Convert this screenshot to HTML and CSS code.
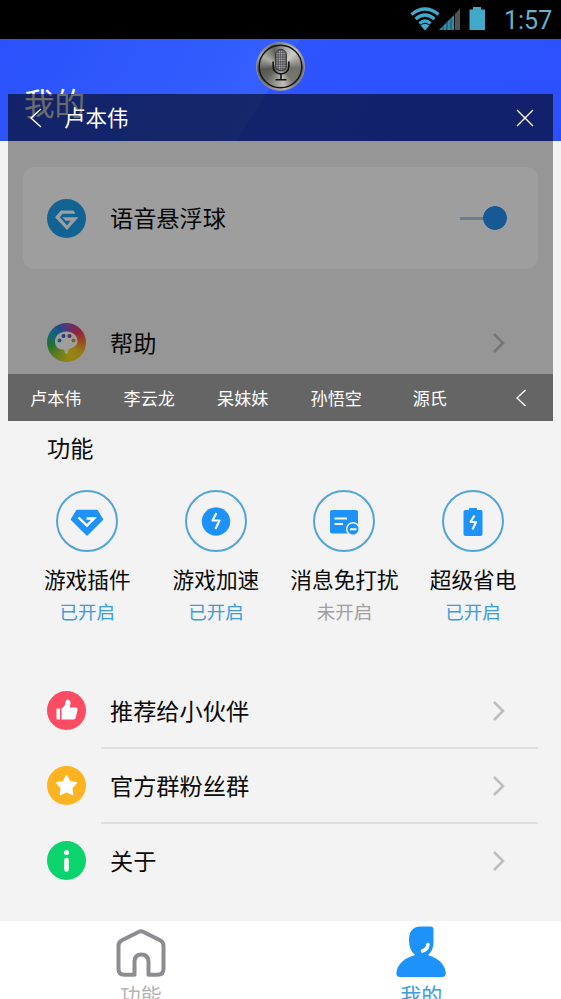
FILE: index.html
```html
<!DOCTYPE html>
<html lang="zh-CN">
<head>
<meta charset="utf-8">
<title>我的</title>
<link rel="stylesheet" href="styles.css">
</head>
<body>
<div class="phone">
  <div class="statusbar">
    <svg class="signals" width="80" height="28" viewBox="0 0 80 28">
      <g fill="none" stroke="#43a9cb" stroke-width="3.2">
        <path d="M2.500 8.500Q16 -2.500 29.500 8.500"/>
        <path d="M6.500 13Q16 5 25.500 13"/>
        <path d="M10.500 17.500Q16 12.500 21.500 17.500"/>
      </g>
      <path d="M11.500 19.500Q16 16 20.500 19.500L16 24.500Z" fill="#43a9cb"/>
      <path d="M30 24L45 9V24Z" fill="#368aa6"/>
      <path d="M34 20V24M38 16V24M42 12V24" stroke="#19495c" stroke-width="1"/>
      <path d="M46 8L51 2.500V24H46Z" fill="#4c5658"/>
      <path d="M60.500 3.500H64V1H72V3.500H76V24H60.500Z" fill="#43a9cb"/>
    </svg>
    <span class="clock">1:57</span>
  </div>
  <header class="header"><h1>我的</h1></header>

  <main class="content">
    <section class="card">
      <svg class="icon" viewBox="0 0 39 39">
        <circle cx="19.500" cy="19.500" r="19.500" fill="#1aa1ee"/>
        <path d="M14 11.500H26.500L28.500 14.800H15.500L12.800 18.300L20 26.500L23.800 21.700H18.500L15.500 18.200H31.500L20 31L8 18.300Z" fill="#fff"/>
      </svg>
      <span class="label">语音悬浮球</span>
      <span class="switch"></span>
    </section>

    <div class="row help">
      <svg class="icon" viewBox="0 0 39 39">
        <foreignObject width="39" height="39"><div class="wheel"></div></foreignObject>
        <path d="M19.500 8.500C12 8.500 7.500 13.500 8 19.500C8.500 25 12.500 26.500 16.500 26.500C18 26.500 17 30.500 19.500 31C21.500 31 20.500 26.500 23 25.500C28 24 30.500 22 30.500 18C30.500 12 25 8.500 19.500 8.500Z" fill="#fff"/>
        <circle cx="12.500" cy="17.500" r="2" fill="#2894ca"/><circle cx="16.500" cy="13" r="2" fill="#455fc4"/><circle cx="22.500" cy="13" r="2" fill="#8b4795"/><circle cx="26.500" cy="17.500" r="2" fill="#d79828"/>
      </svg>
      <span class="label">帮助</span>
      <svg class="chevron" viewBox="0 0 14 22"><path d="M2 2L11 11L2 20"/></svg>
    </div>

    <h2 class="section">功能</h2>
    <div class="features">
      <div class="feature">
        <div class="ring"><svg viewBox="0 0 62 62">
          <path d="M21 20.500H41L46.500 29.500L31 45L15.500 29.500Z" fill="#1d93fa" stroke="#1d93fa" stroke-width="1.500" stroke-linejoin="round"/>
          <path d="M22.500 27.500L31 35.500L38 28.500H30.500" fill="none" stroke="#fff" stroke-width="2.400"/>
        </svg></div>
        <span class="name">游戏插件</span><span class="state">已开启</span>
      </div>
      <div class="feature">
        <div class="ring"><svg viewBox="0 0 62 62">
          <circle cx="31" cy="31.500" r="14.200" fill="#1d93fa"/>
          <path d="M31.500 23L27.500 30.500H34.500L30.500 39" fill="none" stroke="#fff" stroke-width="2.100" stroke-linejoin="round"/>
        </svg></div>
        <span class="name">游戏加速</span><span class="state">已开启</span>
      </div>
      <div class="feature">
        <div class="ring"><svg viewBox="0 0 62 62">
          <rect x="17" y="20" width="28" height="23.500" rx="2" fill="#1d93fa"/>
          <path d="M21.500 28.500H34M21.500 34H30" stroke="#fff" stroke-width="2"/>
          <circle cx="40" cy="39" r="6.300" fill="#1d93fa" stroke="#f3f3f3" stroke-width="1.500"/>
          <path d="M37 39.300H43.500" stroke="#fff" stroke-width="2"/>
        </svg></div>
        <span class="name">消息免打扰</span><span class="state off">未开启</span>
      </div>
      <div class="feature">
        <div class="ring"><svg viewBox="0 0 62 62">
          <rect x="21.500" y="20" width="19" height="26" rx="2" fill="#1d93fa"/>
          <rect x="27" y="18" width="8" height="4" rx="1" fill="#1d93fa"/>
          <path d="M32.500 25.500L28.500 32H34L30.500 39.500" fill="none" stroke="#fff" stroke-width="2.100" stroke-linejoin="round"/>
        </svg></div>
        <span class="name">超级省电</span><span class="state">已开启</span>
      </div>
    </div>

    <div class="list">
      <div class="row">
        <svg class="icon" viewBox="0 0 39 39">
          <circle cx="19.500" cy="19.500" r="19.500" fill="#fb4c63"/>
          <path d="M9.500 17.500H13V28.500H10.500Q9.500 28.500 9.500 27.500ZM14.500 17.500Q18.500 15.500 18.500 10.500Q19 8.500 21 8.500Q23.500 9 23.500 12.500L22.800 16.500H28.500Q31 16.500 30.500 19L28.800 26.500Q28.300 28.500 26.500 28.500H14.500Z" fill="#fff"/>
        </svg>
        <span class="label">推荐给小伙伴</span>
        <svg class="chevron" viewBox="0 0 14 22"><path d="M2 2L11 11L2 20"/></svg>
      </div>
      <div class="row">
        <svg class="icon" viewBox="0 0 39 39">
          <circle cx="19.500" cy="19.500" r="19.500" fill="#feb321"/>
          <path d="M19.500 10L22.600 15.800L29 17L24.600 21.800L25.400 28.300L19.500 25.500L13.600 28.300L14.400 21.800L10 17L16.400 15.800Z" fill="#fff" stroke="#fff" stroke-width="1.800" stroke-linejoin="round"/>
        </svg>
        <span class="label">官方群粉丝群</span>
        <svg class="chevron" viewBox="0 0 14 22"><path d="M2 2L11 11L2 20"/></svg>
      </div>
      <div class="row">
        <svg class="icon" viewBox="0 0 39 39">
          <circle cx="19.500" cy="19.500" r="19.500" fill="#0bd46c"/>
          <circle cx="19.500" cy="11.500" r="2.500" fill="#fff"/>
          <path d="M19.500 19V28.500" stroke="#fff" stroke-width="4.600" stroke-linecap="round"/>
        </svg>
        <span class="label">关于</span>
        <svg class="chevron" viewBox="0 0 14 22"><path d="M2 2L11 11L2 20"/></svg>
      </div>
    </div>
  </main>

  <nav class="tabbar">
    <div class="tab">
      <svg viewBox="0 0 50 50"><path d="M23 2.800Q25 1.800 27 2.800L44 11.200Q47.500 13 47.500 16.500V40Q47.500 45.800 41.500 45.800H32.500V33Q32.500 25.500 25.300 25.500Q18.500 25.500 18.500 33V45.800H8.500Q2.500 45.800 2.500 40V16.500Q2.500 13 6 11.200Z" fill="none" stroke="#8c8c92" stroke-width="4" stroke-linejoin="round"/></svg>
      <span>功能</span>
    </div>
    <div class="tab active">
      <svg viewBox="0 0 50 50"><path d="M25 -2.500H34.500Q37.500 -2.500 37.500 .5V13Q37.500 21.500 32 26Q43 29.500 47 36Q50.500 42 49.500 45.500Q49 48 46 48H4Q1 48 .5 45.500Q0 40 4 35Q8.500 29 19 26Q13 21 13 11Q13 -2.500 25 -2.500Z" fill="#1d93fa"/><path d="M32 15.500Q31.500 20.500 26.500 22" fill="none" stroke="#fff" stroke-width="3.500" stroke-linecap="round"/></svg>
      <span>我的</span>
    </div>
  </nav>

  <div class="panel">
    <div class="bar top">
      <svg width="14" height="20" viewBox="0 0 14 20"><path d="M12 1L2 10L12 19"/></svg>
      <span class="who">卢本伟</span>
      <svg width="18" height="18" viewBox="0 0 18 18"><path d="M1 1L17 17M17 1L1 17"/></svg>
    </div>
    <div class="bar voices">
      <span>卢本伟</span><span>李云龙</span><span>呆妹妹</span><span>孙悟空</span><span>源氏</span>
      <svg width="12" height="18" viewBox="0 0 12 18"><path d="M10.500 1L2 9L10.500 17"/></svg>
    </div>
  </div>

  <div class="mic">
    <svg viewBox="0 0 48 48">
      <defs><pattern id="mesh" width="2.400" height="2.400" patternUnits="userSpaceOnUse"><rect width="2.400" height="2.400" fill="#4c4c50"/><circle cx="1.200" cy="1.200" r=".8" fill="#c4c4c8"/></pattern></defs>
      <circle cx="24" cy="24" r="21.800" fill="none" stroke="#161616" stroke-width="1.500"/>
      <rect x="19" y="6.500" width="11" height="22" rx="5.500" fill="url(#mesh)" stroke="#303033" stroke-width="1"/>
      <path d="M16.500 19V24C16.500 34 32.500 34 32.500 24V19M24.500 31.500V37M19 37.500H30" fill="none" stroke="#101010" stroke-width="1.600"/>
    </svg>
  </div>
</div>
</body>
</html>
```
FILE: styles.css
```css
* { box-sizing: border-box; }
body {
  margin: 0;
  font-family: "Noto Sans CJK SC", sans-serif;
  color: #0a0a0a;
}
h1, h2 { margin: 0; font-weight: 400; }
svg { display: block; flex: none; }
.phone {
  position: relative;
  width: 561px;
  height: 999px;
  overflow: hidden;
  display: flex;
  flex-direction: column;
  background: #f3f3f3;
}
.statusbar {
  height: 39px;
  flex: none;
  background: #000;
  display: flex;
  justify-content: flex-end;
  align-items: center;
  gap: 15px;
  padding-right: 10px;
}
.clock {
  font: 25px/39px Roboto, sans-serif;
  color: #6cb0ca;
  width: 47px;
  padding-top: 2px;
  white-space: nowrap;
}
.header {
  height: 102px;
  flex: none;
  padding: 40px 0 0 24px;
  background: linear-gradient(122deg, #2a51fb 0, #355fff 48%, #2d54ff 48.200%, #2c50ff 100%);
}
.header h1 { font-size: 30.500px; line-height: 46px; color: #fff; }
.content { flex: 1; padding: 26px 23px 0; }
.card {
  height: 102px;
  border-radius: 12px;
  background: #fff;
  display: flex;
  align-items: center;
  padding: 0 31px 0 24px;
}
.icon { width: 39px; height: 39px; margin-right: 24px; }
.label { flex: 1; font-size: 23.200px; line-height: 34px; padding-bottom: 2px; }
.switch {
  width: 47px;
  height: 24px;
  background:
    radial-gradient(circle at 35px 12px, #2490f0 11.500px, transparent 12.200px),
    linear-gradient(#a6cbed, #a6cbed) 0 11px / 26px 3px no-repeat;
}
.wheel {
  width: 39px;
  height: 39px;
  border-radius: 50%;
  background: conic-gradient(#8b58c0, #f03a60 50deg, #f57a30 85deg, #f5c820 125deg, #f0d820 170deg, #9bca32 220deg, #35b64b 260deg, #20a2cf 305deg, #3978df 335deg, #8b58c0);
}
.row { height: 75px; display: flex; align-items: center; padding: 0 32px 0 24px; position: relative; }
.help { margin-top: 36px; }
.chevron { width: 14px; height: 22px; }
.chevron path { fill: none; stroke: #bebec0; stroke-width: 2.600px; }
.section { margin: 50px 0 0 24px; font-size: 23.200px; line-height: 34px; }
.features { display: grid; grid-template-columns: repeat(4, 128.600px); margin-top: 26px; }
.feature { display: flex; flex-direction: column; align-items: center; white-space: nowrap; }
.ring { width: 62px; height: 62px; border: 2px solid #4fa4dc; border-radius: 50%; }
.ring svg { width: 62px; height: 62px; margin: -2px; }
.name { font-size: 21.700px; line-height: 32px; margin-top: 11px; }
.state { font-size: 18.500px; line-height: 28px; margin-top: 2px; color: #3c9ce0; }
.state.off { color: #a0a0a0; }
.list { margin-top: 48px; }
.list .row + .row::before {
  content: "";
  position: absolute;
  top: -1px;
  left: 78px;
  right: 0;
  height: 2px;
  background: #dedede;
}
.tabbar { height: 78px; flex: none; display: flex; background: #fff; }
.tab {
  flex: 1;
  display: flex;
  flex-direction: column;
  align-items: center;
  padding: 8px 0 0 1px;
  font-size: 21px;
  line-height: 30px;
  color: #b4b4b6;
}
.tab svg { width: 50px; height: 50px; overflow: visible; }
.tab.active { color: #3c9ce0; }
.panel {
  position: absolute;
  left: 8px;
  top: 94px;
  width: 545px;
  height: 327px;
  background: rgba(0, 0, 0, .38);
  display: flex;
  flex-direction: column;
  justify-content: space-between;
  color: #fff;
}
.bar { height: 47px; display: flex; align-items: center; background: rgba(0, 0, 0, .32); }
.bar path { fill: none; stroke: #fff; stroke-width: 1.400px; }
.top { padding: 0 19px 0 21px; }
.who { flex: 1; margin-left: 21px; font-size: 21.500px; line-height: 32px; padding-bottom: 1px; }
.voices { padding-left: 1px; }
.voices span { width: 93.500px; text-align: center; font-size: 17.100px; line-height: 26px; }
.voices svg { margin-left: 38px; }
.mic {
  position: absolute;
  left: 256px;
  top: 42px;
  width: 49px;
  height: 49px;
  border-radius: 50%;
  border: 1px solid #90949c;
  background: conic-gradient(from 20deg, #b0b0ac, #ccccc8 25deg, #71716c 75deg, #777770 120deg, #c0c0b8 150deg, #666660 210deg, #55554f 240deg, #b0b0aa 280deg, #60605b 320deg, #b0b0ac);
}
.mic svg { width: 47px; height: 47px; }
```
